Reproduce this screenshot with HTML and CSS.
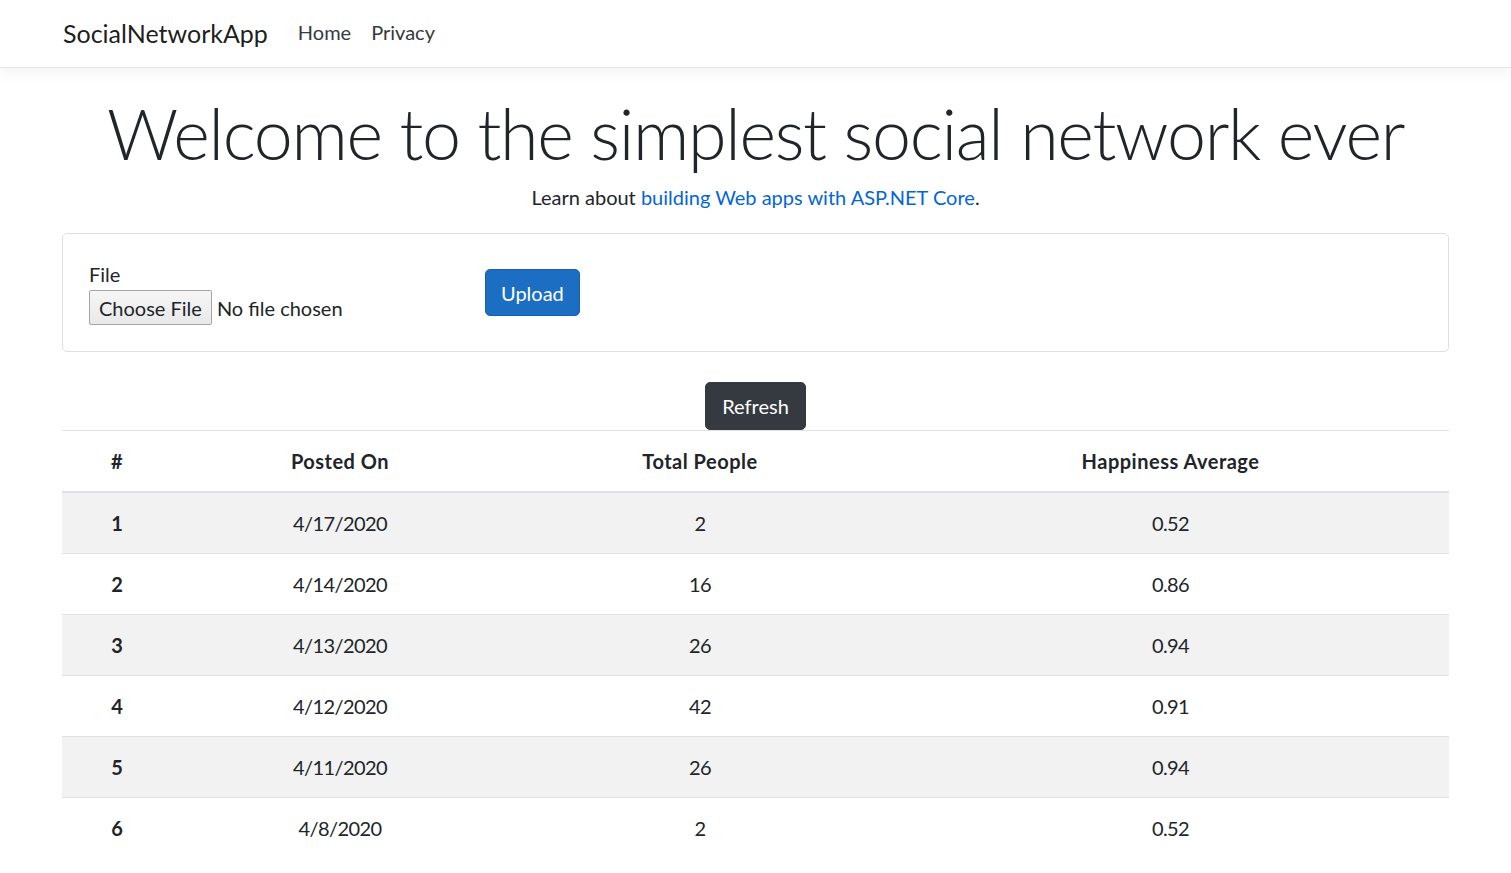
FILE: index.html
```html
<!DOCTYPE html>
<html lang="en">
<head>
<meta charset="utf-8">
<title>Home Page - SocialNetworkApp</title>
<link rel="stylesheet" href="styles.css">
</head>
<body>
<header class="navbar">
  <div class="container nav-inner">
    <a class="brand" href="#">SocialNetworkApp</a>
    <ul class="nav-links">
      <li><a class="nav-link" href="#">Home</a></li>
      <li><a class="nav-link" href="#">Privacy</a></li>
    </ul>
  </div>
</header>
<main class="container main">
  <div class="intro">
    <h1 class="display">Welcome to the simplest social network ever</h1>
    <p class="lead-text">Learn about <a href="#" class="link">building Web apps with ASP.NET Core</a>.</p>
  </div>
  <div class="card">
    <form class="card-body upload-form">
      <div class="file-group">
        <label class="file-label" for="file">File</label>
        <input type="file" id="file" class="file-input">
      </div>
      <button type="button" class="btn btn-primary">Upload</button>
    </form>
  </div>
  <div class="refresh-row">
    <button type="button" class="btn btn-dark">Refresh</button>
  </div>
  <table class="table">
    <colgroup>
      <col class="c1"><col class="c2"><col class="c3"><col class="c4">
    </colgroup>
    <thead>
      <tr><th>#</th><th>Posted On</th><th>Total People</th><th>Happiness Average</th></tr>
    </thead>
    <tbody>
      <tr><th>1</th><td>4/17/2020</td><td>2</td><td>0.52</td></tr>
      <tr><th>2</th><td>4/14/2020</td><td>16</td><td>0.86</td></tr>
      <tr><th>3</th><td>4/13/2020</td><td>26</td><td>0.94</td></tr>
      <tr><th>4</th><td>4/12/2020</td><td>42</td><td>0.91</td></tr>
      <tr><th>5</th><td>4/11/2020</td><td>26</td><td>0.94</td></tr>
      <tr><th>6</th><td>4/8/2020</td><td>2</td><td>0.52</td></tr>
    </tbody>
  </table>
</main>
</body>
</html>
```
FILE: styles.css
```css
* { box-sizing: border-box; }
html, body { margin: 0; padding: 0; }
body {
  font-family: Lato, "Noto Sans", sans-serif;
  font-size: 20px;
  line-height: 1.5;
  color: #212529;
  background: #fff;
}
a { text-decoration: none; }

.container {
  width: 1387px;
  margin: 0 auto;
}

/* Navbar */
.navbar {
  height: 68px;
  background: #fff;
  border-bottom: 1px solid #e5e5e5;
  box-shadow: 0 5px 15px rgba(0, 0, 0, 0.05);
}
.nav-inner {
  display: flex;
  align-items: center;
  height: 66px;
}
.brand {
  font-size: 25px;
  line-height: 37px;
  color: rgba(0, 0, 0, 0.9);
  margin-left: 1px;
  margin-right: 20px;
}
.nav-links {
  display: flex;
  list-style: none;
  margin: -2px 0 0;
  padding: 0;
}
.nav-link {
  display: block;
  padding: 0 10px;
  color: #343a40;
  font-size: 20px;
  line-height: 30px;
}

/* Main */
.main { padding-top: 20px; }
.intro { text-align: center; }
.display {
  margin: 0 0 7px;
  padding-top: 3px;
  font-size: 70px;
  font-weight: 300;
  line-height: 84px;
  letter-spacing: -1.3px;
}
.lead-text {
  margin: 0 0 21px;
  line-height: 30px;
}
.link { color: #0366d6; }

/* Card */
.card {
  border: 1px solid rgba(0, 0, 0, 0.125);
  border-radius: 5px;
}
.card-body { padding: 25px; }
.upload-form {
  display: flex;
  align-items: center;
  margin: 0;
}
.file-group {
  width: 397px;
  display: flex;
  flex-direction: column;
  align-items: flex-start;
}
.file-label {
  display: block;
  line-height: 30px;
  padding-left: 1px;
}
.file-input {
  font-family: Lato, "Noto Sans", sans-serif;
  font-size: 20px;
  color: #212529;
  height: 35px;
  margin: 1px 0 1px 1px;
}
.file-input::file-selector-button {
  font-family: Lato, "Noto Sans", sans-serif;
  font-size: 20px;
  color: #212529;
  height: 35px;
  padding: 0 9px;
  margin-right: 5px;
  border: 1px solid #a6a6a6;
  border-radius: 2px;
  background: linear-gradient(#f6f6f6, #e9e9e9);
}

/* Buttons */
.btn {
  font-family: Lato, "Noto Sans", sans-serif;
  font-size: 20px;
  line-height: 30px;
  padding: 7.5px 15px;
  border: 1px solid transparent;
  border-radius: 5px;
  color: #fff;
  cursor: pointer;
}
.btn-primary {
  background: #1b6ec2;
  border-color: #1861ac;
}
.btn-dark {
  background: #343a40;
  border-color: #343a40;
  padding: 8px 16px;
}
.refresh-row {
  text-align: center;
  margin-top: 30px;
  line-height: 0;
}

/* Table */
.table {
  width: 100%;
  border-collapse: collapse;
  table-layout: fixed;
  text-align: center;
}
.c1 { width: 110px; }
.c2 { width: 336px; }
.c3 { width: 384px; }
.c4 { width: 557px; }
.table th, .table td {
  padding: 15px;
  line-height: 30px;
  border-top: 1px solid #dee2e6;
  vertical-align: top;
}
.table th { font-weight: 700; }
.table td { letter-spacing: -0.6px; }
.table thead th {
  border-bottom: 2px solid #dee2e6;
  letter-spacing: 0.5px;
}
.table tbody tr:nth-child(odd) { background: rgba(0, 0, 0, 0.05); }
```
